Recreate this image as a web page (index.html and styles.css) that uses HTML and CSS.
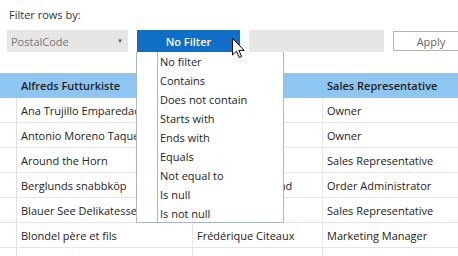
FILE: index.html
```html
<!DOCTYPE html>
<html>
<head>
<meta charset="utf-8">
<link rel="stylesheet" href="styles.css">
</head>
<body>
<div class="page">
  <div class="label">Filter rows by:</div>
  <div class="controls">
    <div class="combo"><span>PostalCode</span><span class="arrow">▼</span></div>
    <div class="filterbtn">No Filter</div>
    <div class="textbox"></div>
    <div class="apply">Apply</div>
  </div>
  <div class="grid">
    <div class="row header">
      <div class="rh"></div>
      <div class="c1">Alfreds Futturkiste</div>
      <div class="c2">Maria Anders</div>
      <div class="c3">Sales Representative</div>
    </div>
    <div class="row"><div class="rh"></div><div class="c1">Ana Trujillo Emparedados y helados</div><div class="c2">Ana Trujillo</div><div class="c3">Owner</div></div>
    <div class="row"><div class="rh"></div><div class="c1">Antonio Moreno Taquería</div><div class="c2">Antonio Moreno</div><div class="c3">Owner</div></div>
    <div class="row"><div class="rh"></div><div class="c1">Around the Horn</div><div class="c2">Thomas Hardy</div><div class="c3">Sales Representative</div></div>
    <div class="row"><div class="rh"></div><div class="c1">Berglunds snabbköp</div><div class="c2">Christina Berglund</div><div class="c3">Order Administrator</div></div>
    <div class="row"><div class="rh"></div><div class="c1">Blauer See Delikatessen</div><div class="c2">Hanna Moos</div><div class="c3">Sales Representative</div></div>
    <div class="row"><div class="rh"></div><div class="c1">Blondel père et fils</div><div class="c2">Frédérique Citeaux</div><div class="c3">Marketing Manager</div></div>
    <div class="row"><div class="rh"></div><div class="c1"></div><div class="c2"></div><div class="c3"></div></div>
  </div>
  <div class="menu">
    <div class="item">No filter</div>
    <div class="item">Contains</div>
    <div class="item">Does not contain</div>
    <div class="item">Starts with</div>
    <div class="item">Ends with</div>
    <div class="item">Equals</div>
    <div class="item">Not equal to</div>
    <div class="item">Is null</div>
    <div class="item">Is not null</div>
  </div>
  <svg class="cursor" width="14" height="22" viewBox="0 0 14 22">
    <path d="M0.5,0.5 L0.5,17 L4.5,13.2 L7.3,19.6 L9.6,18.6 L6.9,12.4 L12.2,12.4 Z" fill="#fff" stroke="#000" stroke-width="1" stroke-linejoin="miter"/>
  </svg>
</div>
</body>
</html>
```
FILE: styles.css
```css
html, body {
  margin: 0;
  padding: 0;
  background: #fff;
}
.page {
  position: relative;
  width: 458px;
  height: 256px;
  overflow: hidden;
  font-family: "Open Sans", "Noto Sans", sans-serif;
  font-size: 11px;
  color: #222;
}
.label {
  height: 30px;
  line-height: 30px;
  padding-left: 9px;
  box-sizing: border-box;
  color: #333;
}
.controls {
  display: flex;
  align-items: center;
  height: 22px;
  padding-left: 7px;
  gap: 9px;
}
.controls > div {
  flex: none;
}
.combo {
  width: 121px;
  height: 22px;
  background: #e6e6e6;
  color: #777;
  display: flex;
  align-items: center;
  justify-content: space-between;
  padding: 0 5px 0 4px;
  box-sizing: border-box;
}
.combo .arrow {
  font-size: 6px;
  color: #555;
}
.filterbtn {
  width: 103px;
  height: 22px;
  background: #0f6fc6;
  color: #fff;
  font-weight: 600;
  display: flex;
  align-items: center;
  justify-content: center;
  box-sizing: border-box;
}
.textbox {
  width: 135px;
  height: 22px;
  background: #e6e6e6;
}
.apply {
  width: 76px;
  height: 20px;
  border: 1px solid #b4b4b4;
  box-sizing: border-box;
  color: #666;
  display: flex;
  align-items: center;
  justify-content: center;
}
.grid {
  margin-top: 21px;
}
.row {
  display: flex;
  height: 25px;
  border-bottom: 1px solid #e6e6e6;
  box-sizing: border-box;
}
.row > div {
  height: 100%;
  display: flex;
  align-items: center;
  white-space: nowrap;
  overflow: hidden;
  box-sizing: border-box;
  padding-left: 4px;
}
.rh {
  width: 17px;
  flex: none;
  border-right: 1px solid #e0e0e0;
  padding-left: 0 !important;
}
.c1 {
  width: 176px;
  flex: none;
  border-right: 1px solid #e6e6e6;
}
.c2 {
  width: 130px;
  flex: none;
  border-right: 1px solid #e6e6e6;
}
.c3 {
  flex: 1;
}
.row.header {
  background: #8ec6f2;
  border-bottom: none;
  font-weight: 600;
}
.row.header > div {
  border-right-color: #8ec6f2;
}
.menu {
  position: absolute;
  left: 136px;
  top: 52px;
  width: 148px;
  height: 171px;
  background: #fff;
  border: 1px solid #a9b7c6;
  border-top: none;
  box-sizing: border-box;
  padding-left: 20px;
}
.menu::before {
  content: "";
  position: absolute;
  left: 20px;
  top: 0;
  bottom: 0;
  border-left: 1px solid #a9b7c6;
}
.item {
  height: 19px;
  line-height: 19px;
  padding-left: 3px;
  color: #222;
}
.cursor {
  position: absolute;
  left: 232px;
  top: 38px;
}
```
